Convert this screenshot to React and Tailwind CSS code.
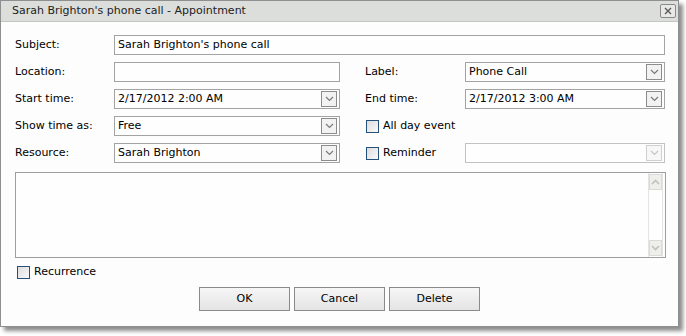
import React from "react";

const Chevron = ({ disabled }) => (
  <svg width="9" height="6" viewBox="0 0 9 6">
    <path d="M1 1 L4.5 4.5 L8 1" fill="none" stroke={disabled ? "#c4c4c4" : "#7a7a7a"} strokeWidth="1.2" />
  </svg>
);

const Input = ({ value = "", className = "" }) => (
  <div className={`h-[20px] border border-[#a3a3a3] bg-[#fefefe] pl-[3px] pt-[1px] flex items-center text-[11px] text-black ${className}`}>
    {value}
  </div>
);

const Select = ({ value = "", disabled = false, className = "" }) => (
  <div
    className={`h-[20px] border ${disabled ? "border-[#c2c2c2]" : "border-[#a3a3a3]"} bg-[#fefefe] pl-[3px] pr-[2px] flex items-center text-[11px] text-black ${className}`}
  >
    <span className="flex-1 pt-[1px]">{value}</span>
    <span
      className={`w-[16px] h-[16px] border ${disabled ? "border-[#cfcfcf] bg-[#f7f7f7]" : "border-[#8c8c8c] bg-[#f2f2f2]"} flex items-center justify-center`}
    >
      <Chevron disabled={disabled} />
    </span>
  </div>
);

const Check = ({ label }) => (
  <div className="flex items-center h-[20px]">
    <span className="w-[13px] h-[13px] border border-[#24507a] bg-gradient-to-br from-[#dcdcdc] to-[#fafafa]" />
    <span className="ml-[4px] pt-[1px] text-[11px] text-black">{label}</span>
  </div>
);

const Label = ({ children }) => <div className="h-[20px] pt-[1px] flex items-center text-[11px] text-black">{children}</div>;

const Button = ({ children }) => (
  <div className="w-[91px] h-[24px] border border-[#8a8a8a] bg-gradient-to-b from-[#f6f6f6] to-[#e4e4e4] flex items-center justify-center text-[11px] text-black">
    {children}
  </div>
);

export default function App() {
  return (
    <div className="w-[686px] h-[336px] bg-white relative" style={{ fontFamily: '"DejaVu Sans", sans-serif' }}>
      <div className="w-[679px] h-[327px] border border-[#8f8f8f] bg-[#fdfdfd] shadow-[4px_4px_4px_rgba(0,0,0,0.45)] flex flex-col">
        <div className="h-[21px] bg-[#dcdedb] border-b border-[#c3c5c2] flex items-center pl-[11px] pr-[2px] shrink-0">
          <span className="flex-1 pt-[1px] text-[11px] text-[#222]">Sarah Brighton's phone call - Appointment</span>
          <span className="w-[16px] h-[14px] rounded-[2px] border border-[#8a8a8a] bg-[#e8e9e7] flex items-center justify-center">
            <svg width="8" height="8" viewBox="0 0 8 8">
              <path d="M1 1 L7 7 M7 1 L1 7" stroke="#5a5a5a" strokeWidth="1.4" />
            </svg>
          </span>
        </div>

        <div className="pl-[14px] pt-[13px]">
          <div className="grid grid-cols-[99px_226px_25px_100px_200px] gap-y-[7px]">
            <Label>Subject:</Label>
            <Input value="Sarah Brighton's phone call" className="col-span-4" />

            <Label>Location:</Label>
            <Input />
            <div />
            <Label>Label:</Label>
            <Select value="Phone Call" />

            <Label>Start time:</Label>
            <Select value="2/17/2012 2:00 AM" />
            <div />
            <Label>End time:</Label>
            <Select value="2/17/2012 3:00 AM" />

            <Label>Show time as:</Label>
            <Select value="Free" />
            <div />
            <div className="col-span-2 pl-[1px]">
              <Check label="All day event" />
            </div>

            <Label>Resource:</Label>
            <Select value="Sarah Brighton" />
            <div />
            <div className="pl-[1px]">
              <Check label="Reminder" />
            </div>
            <Select disabled />
          </div>

          <div className="mt-[9px] w-[651px] h-[86px] border border-[#9e9e9e] bg-[#fefefe] flex justify-end">
            <div className="w-[15px] h-full border-l border-r border-[#e4e4e4] flex flex-col justify-between items-center py-[1px] mr-[2px]">
              <div className="w-[13px] h-[16px] border border-[#dadad6] bg-[#eeeeea] flex items-center justify-center">
                <svg width="9" height="6" viewBox="0 0 9 6">
                  <path d="M1 5 L4.5 1.5 L8 5" fill="none" stroke="#c0c0bc" strokeWidth="1.6" />
                </svg>
              </div>
              <div className="w-[13px] h-[16px] border border-[#dadad6] bg-[#eeeeea] flex items-center justify-center">
                <svg width="9" height="6" viewBox="0 0 9 6">
                  <path d="M1 1 L4.5 4.5 L8 1" fill="none" stroke="#c0c0bc" strokeWidth="1.6" />
                </svg>
              </div>
            </div>
          </div>

          <div className="mt-[4px] pl-[2px]">
            <Check label="Recurrence" />
          </div>

          <div className="mt-[5px] flex gap-[4px] pl-[184px]">
            <Button>OK</Button>
            <Button>Cancel</Button>
            <Button>Delete</Button>
          </div>
        </div>
      </div>
    </div>
  );
}
